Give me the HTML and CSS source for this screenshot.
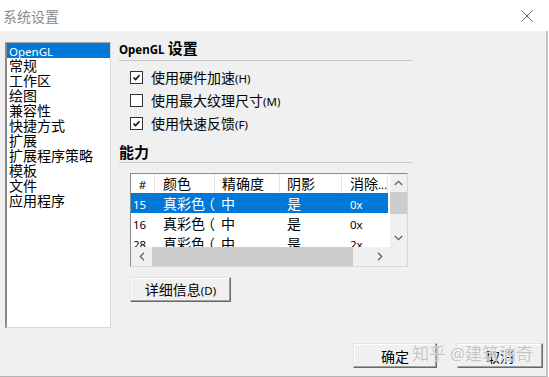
FILE: index.html
```html
<!DOCTYPE html>
<html lang="zh-CN">
<head>
<meta charset="utf-8">
<title>系统设置</title>
<link rel="stylesheet" href="styles.css">
</head>
<body>
<div class="titlebar">
  <span class="title">系统设置</span>
  <svg class="close" viewBox="0 0 12 12" width="12" height="12"><path d="M0.5 0.5 L11.5 11.5 M11.5 0.5 L0.5 11.5" stroke="#6a6a6a" stroke-width="1" fill="none"/></svg>
</div>
<div class="main">
  <div class="content">
    <ul class="nav">
      <li class="sel"><span class="lat">OpenGL</span></li>
      <li>常规</li>
      <li>工作区</li>
      <li>绘图</li>
      <li>兼容性</li>
      <li>快捷方式</li>
      <li>扩展</li>
      <li>扩展程序策略</li>
      <li>模板</li>
      <li>文件</li>
      <li>应用程序</li>
    </ul>
    <div class="panel">
      <div class="heading"><span class="lat">OpenGL</span> 设置</div>
      <div class="rule"></div>
      <div class="checks">
        <div class="check"><span class="box"><svg viewBox="0 0 9 9" width="9" height="9"><path d="M1.5 4.5 L3.6 6.6 L7.5 2.2" stroke="#111" stroke-width="1.6" fill="none"/></svg></span><span>使用硬件加速<span class="lat">(H)</span></span></div>
        <div class="check"><span class="box"></span><span>使用最大纹理尺寸<span class="lat">(M)</span></span></div>
        <div class="check"><span class="box"><svg viewBox="0 0 9 9" width="9" height="9"><path d="M1.5 4.5 L3.6 6.6 L7.5 2.2" stroke="#111" stroke-width="1.6" fill="none"/></svg></span><span>使用快速反馈<span class="lat">(F)</span></span></div>
      </div>
      <div class="heading h2">能力</div>
      <div class="rule r2"></div>
      <div class="table">
        <div class="upper">
          <div class="viewport">
            <div class="row hdr">
              <div class="c c1 center"><span class="lat">#</span></div>
              <div class="c c2">颜色</div>
              <div class="c c3">精确度</div>
              <div class="c c4">阴影</div>
              <div class="c c5">消除<span class="lat">...</span></div>
            </div>
            <div class="row sel">
              <div class="c c1 num"><span class="lat">15</span></div>
              <div class="c c2">真彩色<span class="paren">（</span>中</div>
              <div class="c c3"></div>
              <div class="c c4">是</div>
              <div class="c c5"><span class="lat">0x</span></div>
            </div>
            <div class="row">
              <div class="c c1 num"><span class="lat">16</span></div>
              <div class="c c2">真彩色<span class="paren">（</span>中</div>
              <div class="c c3"></div>
              <div class="c c4">是</div>
              <div class="c c5"><span class="lat">0x</span></div>
            </div>
            <div class="row">
              <div class="c c1 num"><span class="lat">28</span></div>
              <div class="c c2">真彩色<span class="paren">（</span>中</div>
              <div class="c c3"></div>
              <div class="c c4">是</div>
              <div class="c c5"><span class="lat">2x</span></div>
            </div>
          </div>
          <div class="vscroll">
            <div class="sbtn vbtn"><svg viewBox="0 0 9 6" width="9" height="6"><path d="M0.8 5 L4.5 1.3 L8.2 5" stroke="#606060" stroke-width="1.3" fill="none"/></svg></div>
            <div class="vthumb"></div>
            <div class="vtrack"></div>
            <div class="sbtn vbtn"><svg viewBox="0 0 9 6" width="9" height="6"><path d="M0.8 1 L4.5 4.7 L8.2 1" stroke="#606060" stroke-width="1.3" fill="none"/></svg></div>
          </div>
        </div>
        <div class="hscroll">
          <div class="sbtn hbtn-l"><svg viewBox="0 0 6 9" width="6" height="9"><path d="M5 0.8 L1.3 4.5 L5 8.2" stroke="#606060" stroke-width="1.3" fill="none"/></svg></div>
          <div class="hthumb"></div>
          <div class="htrack"></div>
          <div class="sbtn hbtn-r"><svg viewBox="0 0 6 9" width="6" height="9"><path d="M1 0.8 L4.7 4.5 L1 8.2" stroke="#606060" stroke-width="1.3" fill="none"/></svg></div>
          <div class="corner"></div>
        </div>
      </div>
      <button class="btn detail">详细信息<span class="lat">(D)</span></button>
    </div>
  </div>
  <div class="footer">
    <button class="btn ok">确定</button>
    <button class="btn cancel">取消</button>
  </div>
  <div class="watermark">知乎 <span class="wm-at">@</span>建筑油奇</div>
</div>
</body>
</html>
```
FILE: styles.css
```css
body {
  margin: 0;
  width: 549px;
  height: 377px;
  overflow: hidden;
  background: #fff;
  font-family: "Noto Sans CJK SC", sans-serif;
  font-size: 14px;
  color: #000;
}

.lat {
  font-family: "Noto Sans", sans-serif;
  font-size: 11.5px;
}

.titlebar {
  height: 31px;
  box-sizing: border-box;
  padding: 0 16px 0 3px;
  display: flex;
  align-items: center;
  justify-content: space-between;
  background: #fff;
}

.title {
  font-size: 14px;
  line-height: 16px;
  color: #8c8c8c;
}

.close {
  display: block;
}

.main {
  position: relative;
  width: 548px;
  height: 346px;
  box-sizing: border-box;
  background: #f0f0f0;
  border-right: 2px solid #c4c4c4;
  border-bottom: 1px solid #b4b4b4;
  padding-top: 9px;
  display: flex;
  flex-direction: column;
}

.content {
  display: flex;
  align-items: flex-start;
}

.nav {
  list-style: none;
  margin: 2px 0 0 5px;
  padding: 0;
  width: 106px;
  height: 286px;
  box-sizing: border-box;
  background: #fff;
  border: 1px solid #dadada;
  border-top-color: #a8a8a8;
  border-left: 2px solid #8a8a8a;
}

.nav li {
  height: 15px;
  line-height: 15px;
  padding-left: 2px;
  white-space: nowrap;
}

.nav li.sel {
  background: #0078d7;
  color: #fff;
}

.panel {
  margin-left: 8px;
  width: 293px;
  display: flex;
  flex-direction: column;
}

.heading {
  font-weight: bold;
  font-size: 15px;
  line-height: 16px;
  height: 16px;
  white-space: nowrap;
}

.heading .lat {
  font-weight: bold;
  font-size: 11.5px;
}

.rule {
  height: 1px;
  background: #c9c9c9;
  margin-top: 4px;
}

.h2 {
  margin-top: 9px;
}

.r2 {
  margin-top: 2px;
}

.checks {
  margin-top: 5px;
  padding-left: 11px;
}

.check {
  height: 23px;
  display: flex;
  align-items: center;
  gap: 8px;
  line-height: 16px;
}

.box {
  width: 13px;
  height: 13px;
  box-sizing: border-box;
  border: 1px solid #333;
  background: #fff;
  display: flex;
  align-items: center;
  justify-content: center;
}

.box svg {
  display: block;
}

.table {
  margin: 10px 0 0 11px;
  width: 278px;
  height: 94px;
  box-sizing: border-box;
  border: 1px solid #d8d8d8;
  border-top-color: #8c8c8c;
  border-left-color: #8c8c8c;
  background: #fff;
  display: flex;
  flex-direction: column;
}

.upper {
  display: flex;
  height: 73px;
}

.viewport {
  width: 259px;
  height: 73px;
  overflow: hidden;
}

.row {
  display: flex;
  width: 257px;
  height: 20px;
  line-height: 20px;
  white-space: nowrap;
}

.row.hdr {
  height: 19px;
  line-height: 19px;
}

.row.sel {
  background: #0078d7;
  color: #fff;
}

.c {
  flex-shrink: 0;
  box-sizing: border-box;
  overflow: visible;
  padding-left: 8px;
}

.paren {
  display: inline-block;
  width: 14px;
  text-indent: -4px;
  margin-right: 2px;
}

.hdr .c {
  border-right: 1px solid #e5e5e5;
  overflow: hidden;
}

.c1 { width: 24px; }
.c2 { width: 60px; }
.c3 { width: 65px; padding-left: 7px; }
.c4 { width: 62px; padding-left: 7px; }
.c5 { width: 46px; }

.c1.center {
  padding-left: 0;
  text-align: center;
}

.c1.num {
  padding-left: 2px;
}

.vscroll {
  width: 17px;
  display: flex;
  flex-direction: column;
  background: #f0f0f0;
}

.sbtn {
  display: flex;
  align-items: center;
  justify-content: center;
}

.vbtn {
  height: 18px;
}

.vthumb {
  height: 22px;
  background: #cdcdcd;
}

.vtrack {
  flex: 1;
}

.hscroll {
  height: 19px;
  display: flex;
  background: #f0f0f0;
}

.hbtn-l {
  width: 21px;
}

.hthumb {
  width: 201px;
  background: #cdcdcd;
}

.htrack {
  flex: 1;
}

.hbtn-r {
  width: 20px;
}

.corner {
  width: 17px;
  background: #f0f0f0;
}

.btn {
  font-family: "Noto Sans CJK SC", sans-serif;
  font-size: 14px;
  line-height: 16px;
  color: #000;
  background: #f0f0f0;
  padding: 0;
  height: 25px;
  box-sizing: border-box;
  border: 1px solid;
  border-color: #e3e3e3 #696969 #696969 #e3e3e3;
  box-shadow: inset -1px -1px 0 #a0a0a0, inset 1px 1px 0 #fff;
}

.detail {
  margin: 10px 0 0 11px;
  width: 101px;
  align-self: flex-start;
}

.footer {
  margin-top: 15px;
  padding-right: 3px;
  display: flex;
  justify-content: flex-end;
  gap: 20px;
}

.ok {
  width: 84px;
}

.cancel {
  width: 86px;
}

.watermark {
  position: absolute;
  left: 412px;
  top: 312px;
  font-size: 17px;
  line-height: 20px;
  color: rgba(175, 175, 175, 0.75);
  text-shadow: 0 0 1px #fff, 0 0 1px #fff;
  white-space: nowrap;
}

.wm-at {
  font-family: "Noto Sans", sans-serif;
}
```
